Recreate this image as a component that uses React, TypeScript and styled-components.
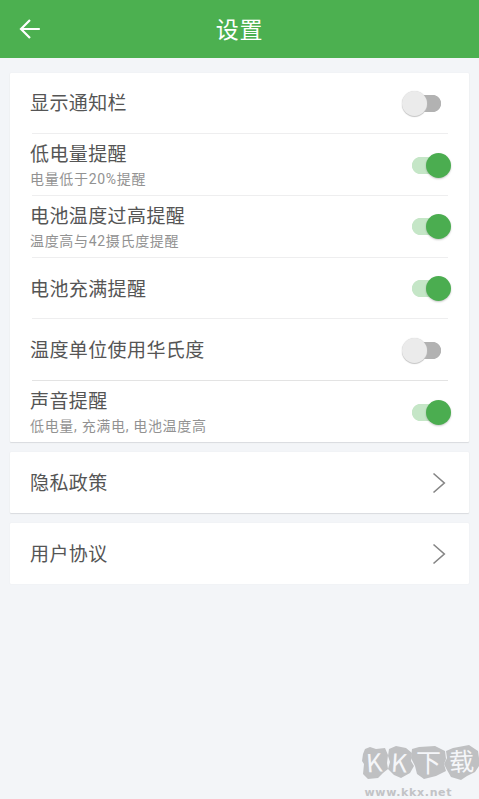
import React, { useState } from "react";
import styled, { createGlobalStyle } from "styled-components";

const GlobalStyle = createGlobalStyle`
  * { box-sizing: border-box; }
  html, body { margin: 0; background: #f3f5f8; }
  body { font-family: "Noto Sans CJK SC", sans-serif; overflow: hidden; }
`;

const Screen = styled.div`
  position: relative;
  width: 479px;
  height: 799px;
  overflow: hidden;
  background: #f3f5f8;
`;

const Header = styled.header`
  display: grid;
  grid-template-columns: 60px 1fr 60px;
  align-items: center;
  height: 58px;
  background: #4cb050;
  color: #fff;
`;

const BackButton = styled.button`
  display: flex;
  height: 58px;
  padding: 0 0 0 19px;
  border: 0;
  align-items: center;
  background: none;
  color: #fff;
`;

const Title = styled.h1`
  margin: 0;
  text-align: center;
  font-size: 23px;
  line-height: 56px;
  height: 58px;
  font-weight: 400;
  letter-spacing: 0.8px;
`;

const Content = styled.main`
  display: flex;
  flex-direction: column;
  gap: 10px;
  padding: 14.6px 10px 0;
`;

const Card = styled.section<{ $flat?: boolean }>`
  width: 459px;
  background: #fff;
  border-radius: 1px;
  box-shadow: ${(p) => (p.$flat ? "0 0 1px #dfe1e5" : "0 1px 1px #d9dbdf, 0 0 1px #dfe1e5")};
`;

const Row = styled.div<{ $strong?: boolean }>`
  display: flex;
  align-items: center;
  justify-content: space-between;
  height: 61.7px;
  margin: 0 21px 0 22px;
  border-bottom: 1px solid ${(p) => (p.$strong ? "#e3e3e3" : "#eeeeef")};
  &:last-child { height: 61px; border-bottom: 0; }
`;

const Texts = styled.div`
  margin: 0 0 1px -2px;
  white-space: nowrap;
`;

const Label = styled.div`
  color: #555;
  font-size: 19px;
  line-height: 28px;
  letter-spacing: 0.4px;
`;

const Hint = styled.div`
  color: #929292;
  font-family: Roboto, "Noto Sans CJK SC", sans-serif;
  font-size: 14px;
  line-height: 20px;
  margin-top: 2px;
  letter-spacing: 0.68px;
`;

const Switch = styled.button<{ $on: boolean }>`
  display: flex;
  flex: none;
  align-items: center;
  justify-content: ${(p) => (p.$on ? "flex-end" : "flex-start")};
  width: 49px;
  height: 26px;
  margin: 1px -3px 0 0;
  padding: 0;
  border: 0;
  background: linear-gradient(${(p) => (p.$on ? "#c5e6c7, #c5e6c7" : "#b2b2b2, #b2b2b2")}) center / 12px 17px no-repeat,
    radial-gradient(circle at 8.5px 8.5px, ${(p) => (p.$on ? "#c5e6c7" : "#b2b2b2")} 8.2px, transparent 9px) 9.5px 4.5px / 17px 17px no-repeat,
    radial-gradient(circle at 8.5px 8.5px, ${(p) => (p.$on ? "#c5e6c7" : "#b2b2b2")} 8.2px, transparent 9px) 21.5px 4.5px / 17px 17px no-repeat;
`;

const Knob = styled.span<{ $on: boolean }>`
  width: 25px;
  height: 25px;
  border-radius: 50%;
  background: ${(p) => (p.$on ? "#4bad50" : "#ebebeb")};
  box-shadow: ${(p) => (p.$on ? "0 1px 2px rgba(0,0,0,.22)" : "0 1px 1px #c4c4c4, 0 0 1px #ccc")};
`;

const LinkRow = styled.div`
  display: flex;
  align-items: center;
  justify-content: space-between;
  height: 61px;
  padding: 0 23px 0 20px;
`;

const LinkLabel = styled(Label)`
  margin-bottom: 2px;
`;

const Watermark = styled.svg`
  position: absolute;
  left: 355px;
  top: 740px;
`;

interface Setting { label: string; hint?: string; on: boolean; strong?: boolean }

const settings: Setting[] = [
  { label: "显示通知栏", on: false },
  { label: "低电量提醒", hint: "电量低于20%提醒", on: true },
  { label: "电池温度过高提醒", hint: "温度高与42摄氏度提醒", on: true },
  { label: "电池充满提醒", on: true },
  { label: "温度单位使用华氏度", on: false, strong: true },
  { label: "声音提醒", hint: "低电量, 充满电, 电池温度高", on: true },
];

function SettingRow({ label, hint, on, strong }: Setting) {
  const [active, setActive] = useState(on);
  return (
    <Row $strong={strong}>
      <Texts>
        <Label>{label}</Label>
        {hint && <Hint>{hint}</Hint>}
      </Texts>
      <Switch $on={active} role="switch" aria-checked={active} aria-label={label} onClick={() => setActive(!active)}>
        <Knob $on={active} />
      </Switch>
    </Row>
  );
}

function NavCard({ label, flat }: { label: string; flat?: boolean }) {
  return (
    <Card $flat={flat}>
      <LinkRow>
        <LinkLabel>{label}</LinkLabel>
        <svg width="14" height="22" viewBox="0 0 14 22" fill="none" stroke="#858585" strokeWidth="1.6">
          <path d="M1.5 1.5 12.3 11 1.5 20.5" />
        </svg>
      </LinkRow>
    </Card>
  );
}

export default function App() {
  return (
    <>
      <GlobalStyle />
      <Screen>
        <Header>
          <BackButton aria-label="返回">
            <svg width="22" height="20" viewBox="0 0 22 20" fill="none" stroke="#fff" strokeWidth="2.2">
              <path d="M20.8 10H2.2M11 1 2 10l9 9" />
            </svg>
          </BackButton>
          <Title>设置</Title>
        </Header>
        <Content>
          <Card>
            {settings.map((s) => <SettingRow key={s.label} {...s} />)}
          </Card>
          <NavCard label="隐私政策" />
          <NavCard label="用户协议" flat />
        </Content>
        <Watermark width="124" height="59" viewBox="0 0 124 59">
          <g fill="#bfc0c2">
            <path d="M10 9 15 7l6 2 9-1 3 7-1 8 1 6-5 4-5 5-10 1-5-5 1-10-2-3 1-7z" />
            <path d="M34 9 41 6l10 2 6 5-1 8 3 5-4 7-9 5-7-3-6-6 2-7-2-6z" />
            <path d="M57 9 64 7l16-1 10 5 1 8-2 5 2 7-10 5-12 3-7-5-2-8-4-8z" />
            <path d="M91 11 98 8l16-3 9 6 1 7 0 8-4 6-8 4-6 4-10-3-4-7-3-6 3-6z" />
          </g>
          <g fill="#f5f6f9" fontFamily="Noto Sans CJK SC, sans-serif" fontWeight="400">
            <text x="11" y="32" fontSize="25" transform="rotate(-4 20 23)">K</text>
            <text x="36" y="32" fontSize="25" transform="rotate(4 44 23)">K</text>
            <text x="61" y="32" fontSize="25">下</text>
            <text x="94" y="31" fontSize="25" transform="rotate(-3 105 22)">载</text>
          </g>
          <text x="9.5" y="56" fill="#c2c3c6" fontFamily="DejaVu Sans, sans-serif" fontWeight="700" fontSize="11" textLength="87" lengthAdjust="spacing">www.kkx.net</text>
        </Watermark>
      </Screen>
    </>
  );
}
